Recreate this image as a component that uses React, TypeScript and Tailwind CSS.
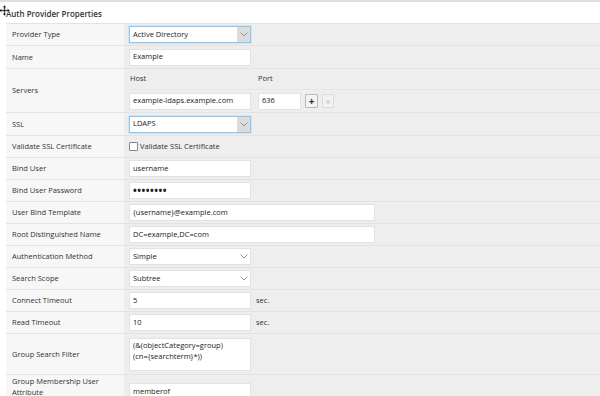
import React from 'react';

const Chevron = () => (
    <svg width="8" height="5" viewBox="0 0 8 5" fill="none">
        <path d="M0.5 0.5 L4 4 L7.5 0.5" stroke="#8a8a8a" strokeWidth="0.9" />
    </svg>
);

const Row: React.FC<{ label: React.ReactNode; h?: string; top?: boolean; children?: React.ReactNode }> = ({
    label,
    h = 'h-[22px]',
    top = false,
    children,
}) => (
    <div className={`grid grid-cols-[118px_1fr] border-b border-[#e3e3e3] ${h}`}>
        <div className={`bg-[#f7f7f7] pl-[6px] flex text-[#333] leading-[11px] ${top ? 'items-start pt-[1px]' : 'items-center'}`}>
            {label}
        </div>
        <div className="bg-[#eeeeee] pl-[5px] flex items-center gap-[5px]">{children}</div>
    </div>
);

const Input: React.FC<{ value: string; w?: string; dots?: boolean }> = ({ value, w = 'w-[122px]', dots }) => (
    <div className={`${w} h-[17px] bg-white border border-[#e2e2e2] flex items-center px-[3px] text-[#222] ${dots ? 'tracking-[0.5px] text-[10px] font-bold' : ''}`}>
        {value}
    </div>
);

const Select: React.FC<{ value: string; focused?: boolean }> = ({ value, focused }) =>
    focused ? (
        <div className="w-[122px] h-[17px] bg-white border border-[#93c5ea] shadow-[0_0_0_1px_#cfe6f7] flex items-center text-[#222]">
            <span className="flex-1 px-[3px]">{value}</span>
            <span className="w-[13px] h-full bg-[#dcdcdc] flex items-center justify-center">
                <Chevron />
            </span>
        </div>
    ) : (
        <div className="w-[122px] h-[17px] bg-white border border-[#e2e2e2] flex items-center text-[#222]">
            <span className="flex-1 px-[3px]">{value}</span>
            <span className="w-[13px] flex items-center justify-center">
                <Chevron />
            </span>
        </div>
    );

const MoveCursor = () => (
    <svg width="11" height="11" viewBox="0 0 11 11" className="absolute left-[-1px] top-[3px]">
        <path
            d="M5.5 0 L7.5 2.5 L6.2 2.5 L6.2 4.8 L8.5 4.8 L8.5 3.5 L11 5.5 L8.5 7.5 L8.5 6.2 L6.2 6.2 L6.2 8.5 L7.5 8.5 L5.5 11 L3.5 8.5 L4.8 8.5 L4.8 6.2 L2.5 6.2 L2.5 7.5 L0 5.5 L2.5 3.5 L2.5 4.8 L4.8 4.8 L4.8 2.5 L3.5 2.5 Z"
            fill="#111"
            stroke="#fff"
            strokeWidth="0.5"
        />
    </svg>
);

export default function App() {
    return (
        <div className="w-[600px] h-[396px] overflow-hidden bg-white relative font-['Open_Sans',sans-serif] text-[7.5px] border-t-2 border-[#dedede]">
            <MoveCursor />
            <div className="h-[21px] pl-[6px] pt-[3px] flex items-center text-[8px] font-semibold text-[#333]">
                Auth Provider Properties
            </div>
            <div className="ml-[6px] border-t border-[#e3e3e3]">
                <Row label="Provider Type">
                    <Select value="Active Directory" focused />
                </Row>
                <Row label="Name" h="h-[23px]">
                    <Input value="Example" />
                </Row>
                <div className="grid grid-cols-[118px_1fr] border-b border-[#e3e3e3] h-[44px]">
                    <div className="bg-[#f7f7f7] pl-[6px] flex items-center text-[#333]">Servers</div>
                    <div className="bg-[#eeeeee] flex flex-col">
                        <div className="h-[21px] pl-[6px] flex items-center border-b border-[#e6e6e6] text-[#333]">
                            <span className="w-[128px]">Host</span>
                            <span>Port</span>
                        </div>
                        <div className="flex-1 pl-[5px] flex items-center">
                            <Input value="example-ldaps.example.com" />
                            <div className="ml-[7px]">
                                <Input value="636" w="w-[43px]" />
                            </div>
                            <div className="ml-[4px] w-[13px] h-[14px] border border-[#b9b9b9] bg-[#f4f4f4] rounded-[1px] flex items-center justify-center text-[#333] text-[10px] font-bold leading-none">
                                +
                            </div>
                            <div className="ml-[4px] w-[12px] h-[14px] border border-[#dadada] bg-[#f2f2f2] rounded-[1px] flex items-center justify-center text-[#bdbdbd] text-[9px] leading-none">
                                ×
                            </div>
                        </div>
                    </div>
                </div>
                <Row label="SSL" h="h-[23px]">
                    <Select value="LDAPS" focused />
                </Row>
                <Row label="Validate SSL Certificate">
                    <div className="flex items-center gap-[2px] text-[#333]">
                        <span className="w-[9px] h-[9px] bg-white border border-[#888] rounded-[1px]" />
                        Validate SSL Certificate
                    </div>
                </Row>
                <Row label="Bind User">
                    <Input value="username" />
                </Row>
                <Row label="Bind User Password">
                    <Input value="••••••••" dots />
                </Row>
                <Row label="User Bind Template">
                    <Input value="{username}@example.com" w="w-[246px]" />
                </Row>
                <Row label="Root Distinguished Name">
                    <Input value="DC=example,DC=com" w="w-[246px]" />
                </Row>
                <Row label="Authentication Method">
                    <Select value="Simple" />
                </Row>
                <Row label="Search Scope">
                    <Select value="Subtree" />
                </Row>
                <Row label="Connect Timeout">
                    <Input value="5" />
                    <span className="text-[#333]">sec.</span>
                </Row>
                <Row label="Read Timeout">
                    <Input value="10" />
                    <span className="text-[#333]">sec.</span>
                </Row>
                <Row label="Group Search Filter" h="h-[41px]">
                    <div className="w-[122px] h-[33px] bg-white border border-[#e2e2e2] px-[3px] pt-[1px] text-[#222] leading-[11px]">
                        (&amp;(objectCategory=group)
                        <br />
                        (cn={'{searchterm}'}*))
                    </div>
                </Row>
                <Row
                    label={
                        <span>
                            Group Membership User
                            <br />
                            Attribute
                        </span>
                    }
                    h="h-[30px]"
                    top
                >
                    <div className="self-start mt-[8px]">
                        <Input value="memberof" />
                    </div>
                </Row>
            </div>
        </div>
    );
}
